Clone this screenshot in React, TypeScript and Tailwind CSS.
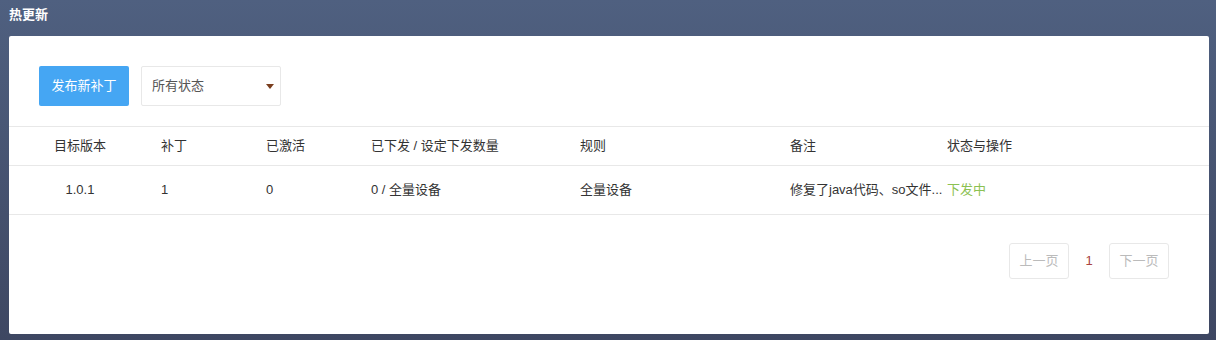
import React from "react";

const font = { fontFamily: '"Liberation Sans", "Noto Sans CJK SC", sans-serif' };

export default function App() {
  const cols = "grid grid-cols-[142px_105px_105px_209px_210px_167px_1fr]";
  return (
    <div
      className="w-[1216px] h-[340px] bg-gradient-to-b from-[#4f6080] to-[#3e4762] text-[13px] text-[#333]"
      style={font}
    >
      <div className="h-[36px] pl-[9px] pt-[5px] text-white font-bold text-[13px]">热更新</div>
      <div className="ml-[9px] w-[1200px] h-[298px] bg-white rounded-[2px]">
        <div className="flex items-center gap-[12px] pl-[30px] pt-[30px] pb-[20px]">
          <button className="w-[90px] h-[40px] bg-[#45a6f3] text-white rounded-[2px] text-[13px]">发布新补丁</button>
          <div className="w-[140px] h-[40px] border border-[#e8e8e8] rounded-[2px] flex items-center justify-between pl-[10px] pr-[6px] text-[#555]">
            <span>所有状态</span>
            <span className="w-0 h-0 border-l-[4px] border-r-[4px] border-t-[5px] border-l-transparent border-r-transparent border-t-[#7a3e1e]" />
          </div>
        </div>
        <div className={`${cols} h-[40px] items-center border-t border-b border-[#e8e8e8]`}>
          <div className="text-center">目标版本</div>
          <div className="pl-[10px]">补丁</div>
          <div className="pl-[10px]">已激活</div>
          <div className="pl-[10px]">已下发 / 设定下发数量</div>
          <div className="pl-[10px]">规则</div>
          <div className="pl-[10px]">备注</div>
          <div>状态与操作</div>
        </div>
        <div className={`${cols} h-[49px] items-center border-b border-[#e8e8e8]`}>
          <div className="text-center">1.0.1</div>
          <div className="pl-[10px]">1</div>
          <div className="pl-[10px]">0</div>
          <div className="pl-[10px]">0 / 全量设备</div>
          <div className="pl-[10px]">全量设备</div>
          <div className="pl-[10px] whitespace-nowrap">修复了java代码、so文件...</div>
          <div className="text-[#8cc152]">下发中</div>
        </div>
        <div className="flex justify-end items-center pr-[40px] pt-[28px] gap-0">
          <div className="w-[60px] h-[36px] border border-[#e8e8e8] rounded-[3px] flex items-center justify-center text-[#bbb]">上一页</div>
          <div className="w-[40px] text-center text-[#a94442]">1</div>
          <div className="w-[60px] h-[36px] border border-[#e8e8e8] rounded-[3px] flex items-center justify-center text-[#bbb]">下一页</div>
        </div>
      </div>
    </div>
  );
}
